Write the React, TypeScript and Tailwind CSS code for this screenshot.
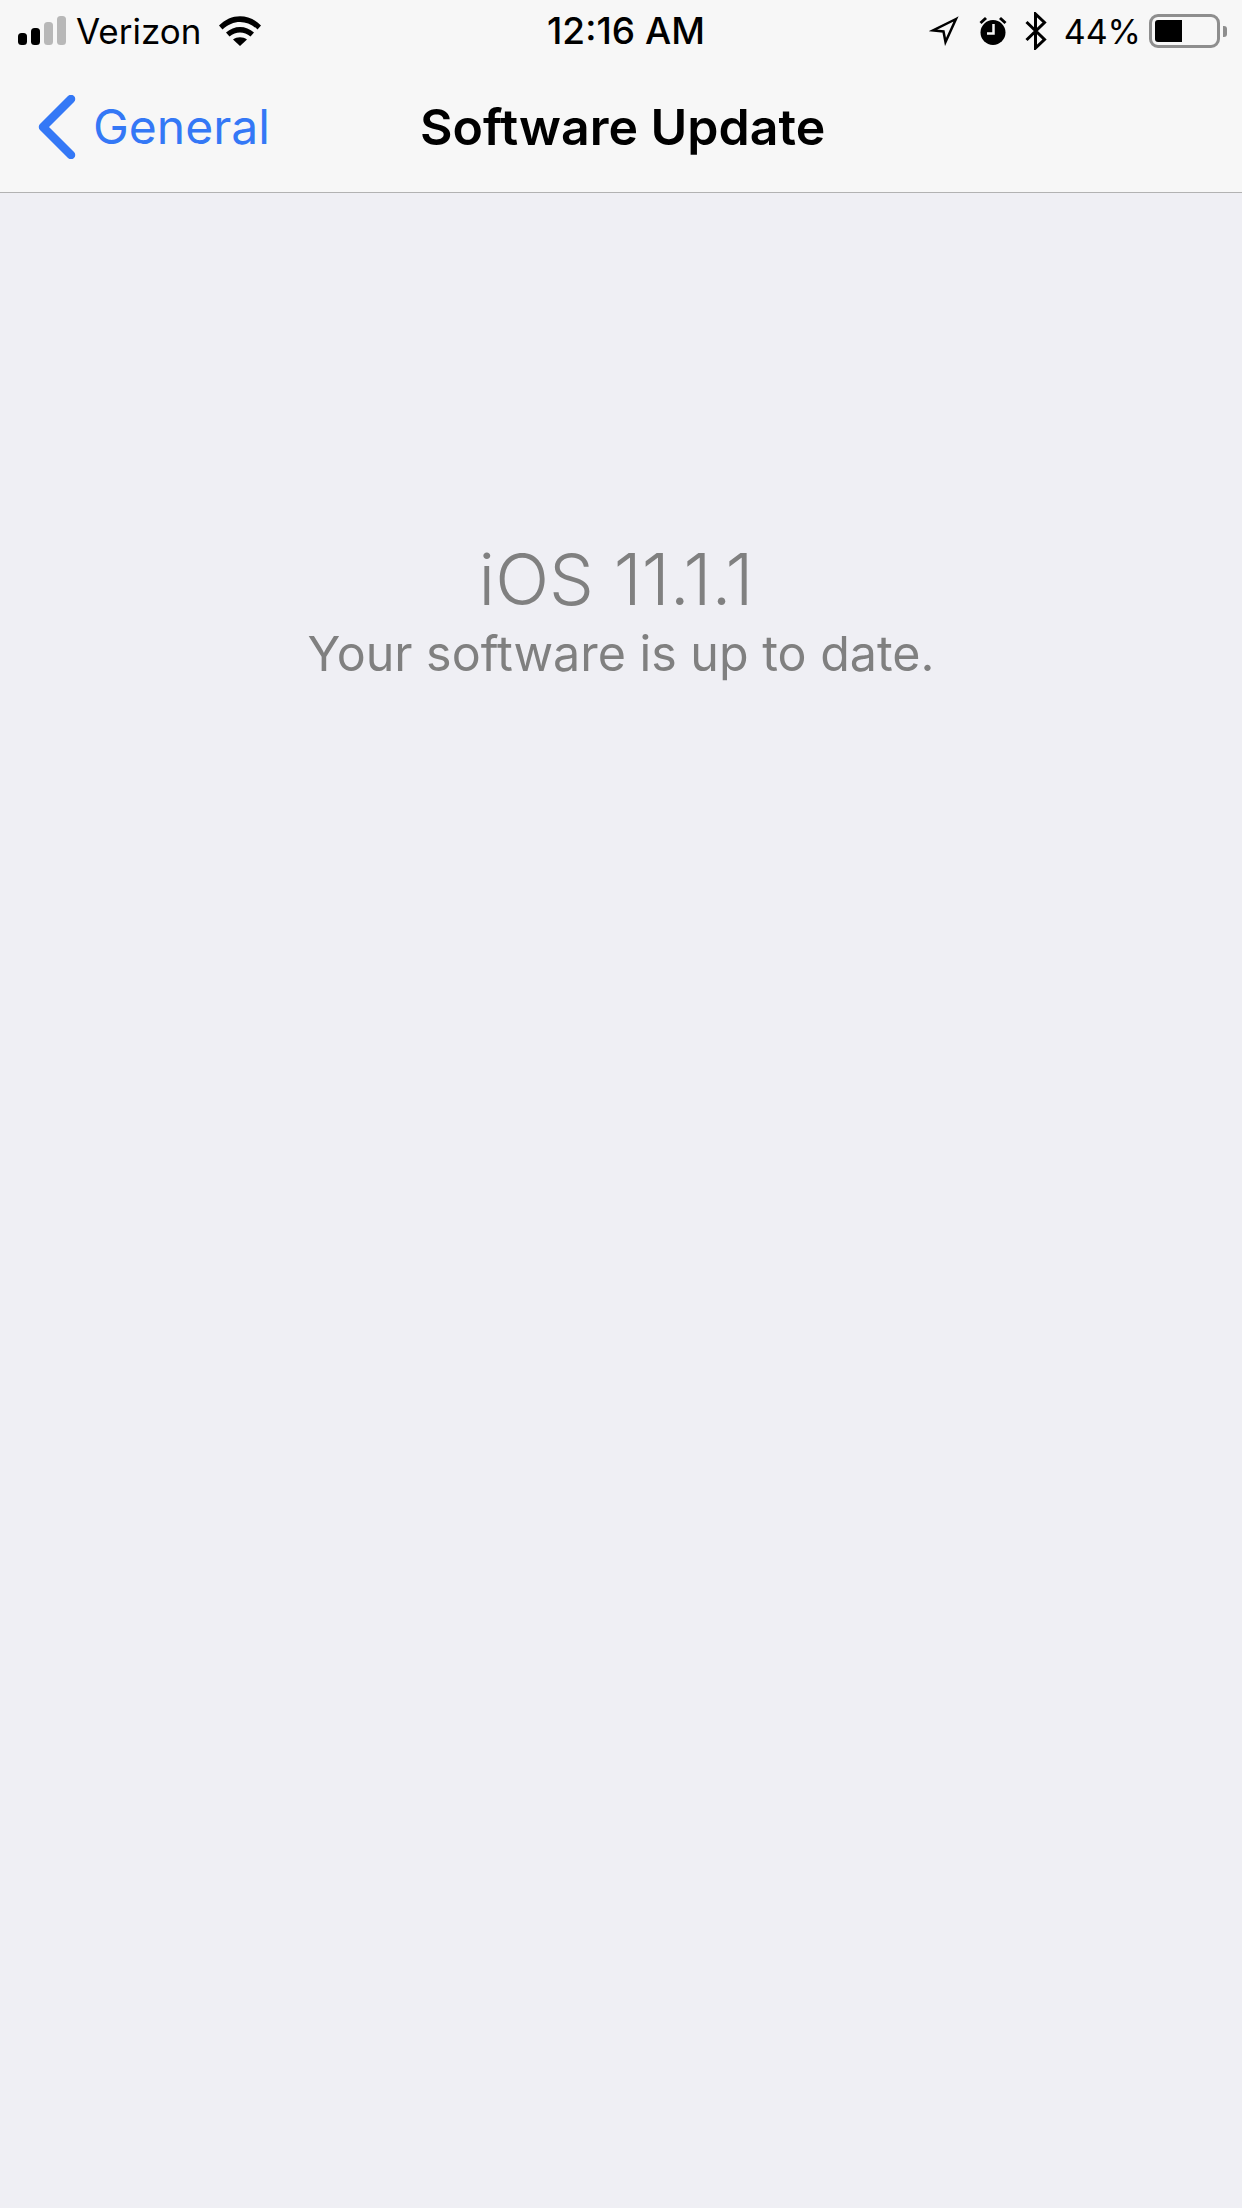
import React from 'react';

const SignalBars = () => (
  <svg width="50" height="30" viewBox="0 0 50 30" className="block">
    <rect x="0" y="17" width="9" height="12" rx="3.5" fill="#000" />
    <rect x="13" y="12" width="9" height="17" rx="3.5" fill="#000" />
    <rect x="26" y="6" width="9" height="23" rx="3.5" fill="#b8b8b8" />
    <rect x="39" y="0" width="9" height="29" rx="3.5" fill="#b8b8b8" />
  </svg>
);

const WifiIcon = () => (
  <svg width="42" height="30" viewBox="0 0 42 30" className="block">
    <path d="M0 9.5 C12 -3 30 -3 42 9.5 L38.5 13.5 C28 3.5 14 3.5 3.5 13.5 Z" fill="#000" />
    <path d="M7 16.5 C15 9 27 9 35 16.5 L31.5 20.5 C25 15 17 15 10.5 20.5 Z" fill="#000" />
    <path d="M14 23.5 C18 20.5 24 20.5 28 23.5 L21 30 Z" fill="#000" />
  </svg>
);

const LocationIcon = () => (
  <svg width="30" height="30" viewBox="0 0 30 30" className="block">
    <path d="M27 3 L4 14.5 L14.5 15.5 L16.5 26 Z" fill="none" stroke="#000" strokeWidth="2.5" strokeLinejoin="miter" />
  </svg>
);

const AlarmIcon = () => (
  <svg width="28" height="30" viewBox="0 0 28 30" className="block">
    <circle cx="14" cy="16.5" r="12.5" fill="#000" />
    <path d="M0.5 6 L6 1 L8 3 L2.5 8 Z M27.5 6 L22 1 L20 3 L25.5 8 Z" fill="#000" />
    <path d="M14.5 8 V17.5 H8" fill="none" stroke="#f7f7f7" strokeWidth="2.5" />
  </svg>
);

const BluetoothIcon = () => (
  <svg width="22" height="38" viewBox="0 0 22 38" className="block">
    <path d="M1.5 10 L19.5 27.5 L10.5 36 V2 L19.5 10.5 L1.5 28" fill="none" stroke="#000" strokeWidth="3" />
  </svg>
);

const Battery = () => (
  <div className="flex items-center">
    <div className="w-[71px] h-[34px] rounded-[9px] border-[3px] border-[#8e8e8e] p-[3px]">
      <div className="w-[27px] h-full rounded-l-[3px] bg-black" />
    </div>
    <div className="ml-[3px] w-[4px] h-[11px] rounded-r-[3px] bg-[#8e8e8e]" />
  </div>
);

export default function App() {
  return (
    <div className="w-[1242px] h-[2208px] bg-[#efeff4] font-['Inter',sans-serif]">
      <header className="h-[193px] bg-[#f7f7f7] border-b-[1.5px] border-[#b2b2b2]">
        <div className="h-[62px] flex items-center text-black text-[35px]">
          <div className="w-[547px] flex items-center pl-[18px]">
            <SignalBars />
            <span className="ml-[8px]">Verizon</span>
            <div className="ml-[18px]">
              <WifiIcon />
            </div>
          </div>
          <span className="font-medium text-[37px]">12:16 AM</span>
          <div className="ml-auto flex items-center pr-[15px]">
            <LocationIcon />
            <div className="ml-[20px]">
              <AlarmIcon />
            </div>
            <div className="ml-[18px]">
              <BluetoothIcon />
            </div>
            <span className="ml-[17px] mr-[8px] text-[34px]">44%</span>
            <Battery />
          </div>
        </div>
        <div className="h-[129px] flex items-center">
          <div className="w-[420px] flex items-center pl-[38px] text-[#3478f6]">
            <svg width="38" height="64" viewBox="0 0 38 64" className="block">
              <path d="M33 4 L5 32 L33 60" fill="none" stroke="#3478f6" strokeWidth="8.5" strokeLinecap="round" strokeLinejoin="round" />
            </svg>
            <span className="ml-[17px] text-[48px] leading-none">General</span>
          </div>
          <h1 className="text-[50px] leading-none font-semibold text-black">Software Update</h1>
        </div>
      </header>
      <main className="pt-[346px] flex flex-col items-center text-[#808080]">
        <p className="text-[71px] leading-[80px] font-[350] pr-[10px]">iOS 11.1.1</p>
        <p className="text-[48.4px] leading-[70px] font-normal">Your software is up to date.</p>
      </main>
    </div>
  );
}
